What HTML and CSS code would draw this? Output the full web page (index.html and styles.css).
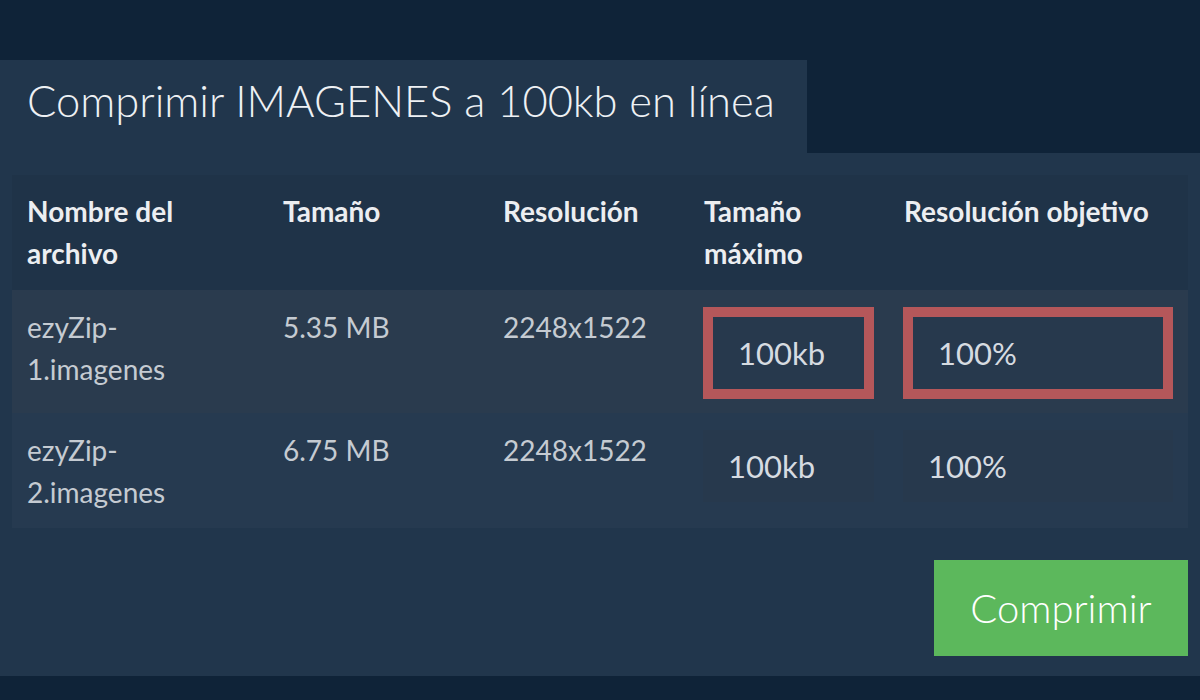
FILE: index.html
```html
<!DOCTYPE html>
<html lang="es">
<head>
<meta charset="utf-8">
<title>Comprimir IMAGENES a 100kb en línea</title>
<link rel="stylesheet" href="styles.css">
</head>
<body>
<div class="page">
  <div class="tab"><h1 class="title">Comprimir IMAGENES a 100kb en línea</h1></div>
  <div class="panel">
    <table class="files">
      <colgroup>
        <col class="c1"><col class="c2"><col class="c3"><col class="c4"><col class="c5">
      </colgroup>
      <thead>
        <tr class="head">
          <th>Nombre del archivo</th>
          <th>Tamaño</th>
          <th>Resolución</th>
          <th>Tamaño máximo</th>
          <th>Resolución objetivo</th>
        </tr>
      </thead>
      <tbody>
        <tr class="row row-a">
          <td>ezyZip-<br>1.imagenes</td>
          <td>5.35 MB</td>
          <td>2248x1522</td>
          <td><div class="field hl">100kb</div></td>
          <td><div class="field hl">100%</div></td>
        </tr>
        <tr class="row row-b">
          <td>ezyZip-<br>2.imagenes</td>
          <td>6.75 MB</td>
          <td>2248x1522</td>
          <td><div class="field">100kb</div></td>
          <td><div class="field">100%</div></td>
        </tr>
      </tbody>
    </table>
    <div class="actions"><button class="btn">Comprimir</button></div>
  </div>
</div>
</body>
</html>
```
FILE: styles.css
```css
html, body {
  margin: 0;
  padding: 0;
}
body {
  background: #0f2338;
  font-family: Lato, "Open Sans", sans-serif;
  width: 1200px;
  height: 700px;
  overflow: hidden;
}
.page {
  padding-top: 60px;
}
.tab {
  width: 807px;
  height: 93px;
  box-sizing: border-box;
  padding-top: 14px;
  background: #21364c;
}
.title {
  margin: 0 0 0 27px;
  font-weight: 300;
  font-size: 43.5px;
  line-height: 52px;
  color: #eef1f4;
  letter-spacing: 0;
}
.panel {
  background: #21364c;
  height: 523px;
  box-sizing: border-box;
  padding: 22px 12px 20px 12px;
}
.files {
  width: 1176px;
  border-collapse: collapse;
  table-layout: fixed;
}
.c1 { width: 256px; }
.c2 { width: 220px; }
.c3 { width: 201px; }
.c4 { width: 200px; }
.c5 { width: 299px; }
.files th, .files td {
  padding: 16px 14px 14px 15px;
  text-align: left;
  vertical-align: top;
  font-size: 28px;
  line-height: 42px;
}
.head {
  background: #1f3348;
}
.files th {
  font-weight: 700;
  color: #eceef1;
  padding-top: 15px;
  padding-bottom: 16px;
}
.files td {
  font-weight: 400;
  color: #c5cbd2;
}
.row-a { background: #2a3b4e; }
.row-b { background: #263a50; }
.row-b td { padding-bottom: 15px; }
.field {
  box-sizing: border-box;
  width: 100%;
  margin: 1px 0 0 -1px;
  height: 72px;
  line-height: 72px;
  padding-left: 25px;
  background: #27394d;
  color: #d6dbe1;
  font-size: 31px;
}
.field.hl {
  height: 92px;
  line-height: 72px;
  border: 10px solid #b5575a;
}
.actions {
  display: flex;
  justify-content: flex-end;
  margin-top: 32px;
}
.btn {
  width: 254px;
  height: 96px;
  border: 0;
  background: #5cb85c;
  color: #ffffff;
  font-family: Lato, "Open Sans", sans-serif;
  font-weight: 300;
  font-size: 40px;
  padding: 0;
}
```
